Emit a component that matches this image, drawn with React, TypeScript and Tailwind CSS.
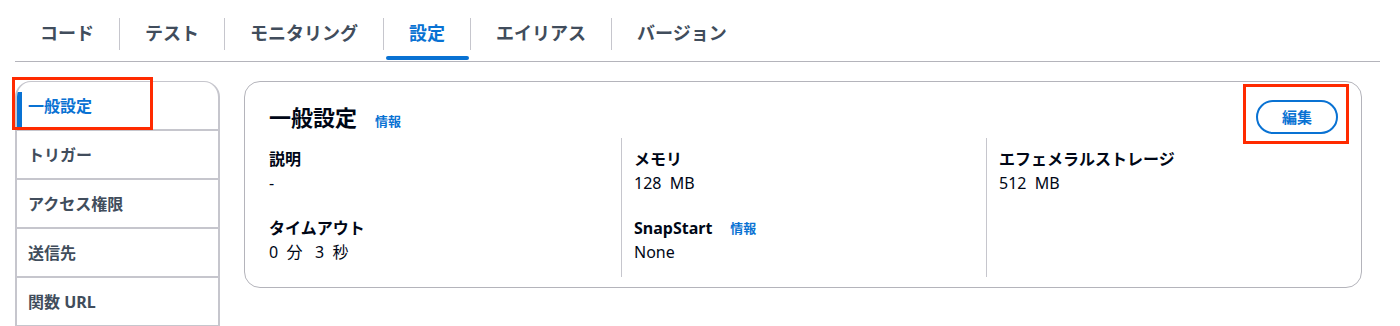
import { useState } from "react"

const tabs = ["コード", "テスト", "モニタリング", "設定", "エイリアス", "バージョン"]
const navItems = ["一般設定", "トリガー", "アクセス権限", "送信先", "関数 URL"]

const font = { fontFamily: '"Noto Sans", "Noto Sans CJK JP", sans-serif' }

function InfoLink() {
  return <a className="ml-[18px] text-[13px] font-bold text-[#0972d3] cursor-pointer">情報</a>
}

function Field({ label, value, info }: { label: string; value: string; info?: boolean }) {
  return (
    <div className="flex flex-col">
      <div className="flex items-center text-[16px] font-bold leading-[24px] text-[#000716]">
        {label}
        {info && <InfoLink />}
      </div>
      <div className="text-[16px] leading-[24px] text-[#000716] whitespace-pre">{value}</div>
    </div>
  )
}

export default function App() {
  const [activeTab, setActiveTab] = useState("設定")
  const [activeNav, setActiveNav] = useState("一般設定")

  return (
    <div className="w-[1400px] h-[326px] overflow-hidden bg-white" style={font}>
      {/* tabs */}
      <div className="ml-[15px] mr-[20px] flex h-[62px] items-stretch border-b border-[#b4b4bb] pt-[6px]">
        {tabs.map((tab, i) => (
          <div key={tab} className="relative flex items-center">
            {i > 0 && <div className="h-[32px] w-px bg-[#c6c6cd]" />}
            <button
              onClick={() => setActiveTab(tab)}
              className={`relative flex h-full items-center px-[25px] text-[18px] font-bold ${
                activeTab === tab ? "text-[#0972d3]" : "text-[#414d5c]"
              }`}
            >
              {tab}
              {activeTab === tab && (
                <span className="absolute bottom-[1px] left-[2px] right-[1px] h-[4px] rounded-full bg-[#0972d3]" />
              )}
            </button>
          </div>
        ))}
      </div>

      <div className="mt-[19px] ml-[15px] flex gap-[24px]">
        {/* side nav */}
        <div className="relative w-[205px] shrink-0">
          <div className="overflow-hidden rounded-t-[16px] border-x-2 border-t border-[#c6c6cd]">
            {navItems.map((item) => (
              <button
                key={item}
                onClick={() => setActiveNav(item)}
                className={`relative flex h-[49px] w-full items-center border-b-2 border-[#c6c6cd] pl-[11px] text-left text-[16px] font-bold ${
                  activeNav === item ? "text-[#0972d3]" : "text-[#414d5c]"
                }`}
              >
                {activeNav === item && (
                  <span className="absolute left-0 top-[10px] bottom-[1px] w-[5px] bg-[#0972d3]" />
                )}
                {item}
              </button>
            ))}
          </div>
          <div className="pointer-events-none absolute left-[-3px] top-[-4px] h-[53px] w-[141px] border-[3px] border-[#ff2a00]" />
        </div>

        {/* main card */}
        <div className="relative h-[207px] w-[1118px] rounded-[16px] border border-[#b4b4bb] px-[24px] pt-[18px]">
          <div className="flex items-center justify-between">
            <div className="flex items-baseline">
              <h2 className="text-[22px] font-bold leading-[32px] text-[#000716]">一般設定</h2>
              <InfoLink />
            </div>
            <button className="mr-[-1px] h-[34px] w-[82px] rounded-full border-2 border-[#0972d3] text-[15px] font-bold text-[#0972d3]">
              編集
            </button>
          </div>
          <div className="pointer-events-none absolute right-[12px] top-[2px] h-[60px] w-[106px] border-[3px] border-[#ff2a00]" />

          <div className="mt-[4px] flex">
            <div className="flex h-[139px] w-[352px] flex-col gap-[21px] pt-[9px]">
              <Field label="説明" value="-" />
              <Field label="タイムアウト" value="0  分   3  秒" />
            </div>
            <div className="flex h-[139px] w-[365px] flex-col gap-[21px] border-l border-[#c6c6cd] pl-[12px] pt-[9px]">
              <Field label="メモリ" value="128  MB" />
              <Field label="SnapStart" value="None" info />
            </div>
            <div className="flex h-[139px] flex-1 flex-col gap-[21px] border-l border-[#c6c6cd] pl-[12px] pt-[9px]">
              <Field label="エフェメラルストレージ" value="512  MB" />
            </div>
          </div>
        </div>
      </div>
    </div>
  )
}
